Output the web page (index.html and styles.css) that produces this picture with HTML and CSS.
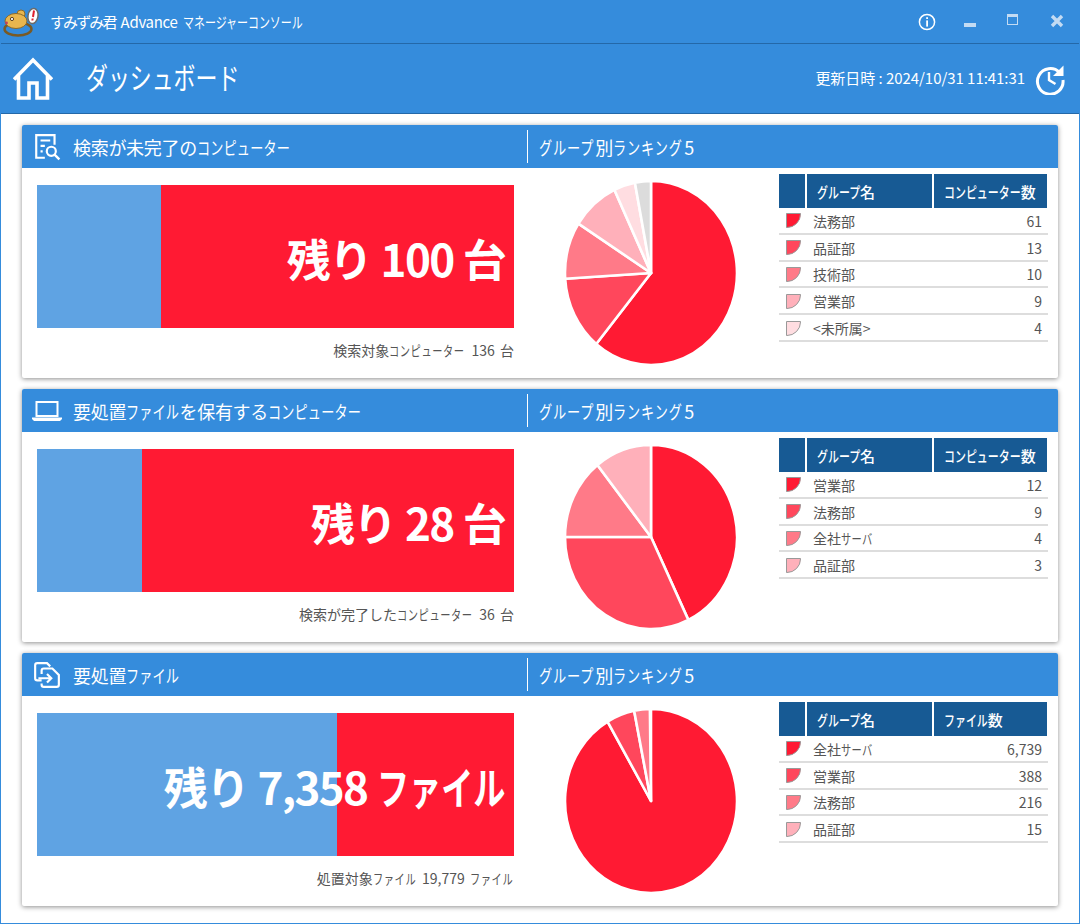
FILE: index.html
```html
<!DOCTYPE html>
<html lang="ja">
<head>
  <meta charset="UTF-8">
  <title>すみずみ君 Advance マネージャーコンソール</title>
  <link rel="stylesheet" href="styles.css">
</head>
<body>
  <div class="app">
    <div class="titlebar">
      <svg class="logo" viewBox="0 0 40 36">
        <ellipse cx="17" cy="26" rx="13.5" ry="6.5" fill="none" stroke="#7a5a24" stroke-width="2.4"/>
        <circle cx="20" cy="11" r="4" fill="#e8b64e" stroke="#8a6a2c"/>
        <ellipse cx="15" cy="18" rx="11" ry="7.5" fill="#e8b64e" stroke="#8a6a2c"/>
        <circle cx="11" cy="16" r="1.6" fill="#fff" stroke="#5a4020"/>
        <circle cx="5.5" cy="20" r="1.4" fill="#c0405a"/>
        <ellipse cx="32" cy="13" rx="5" ry="7.6" fill="#fff" stroke="#6b6b6b" stroke-width="1.5" transform="rotate(10 32 13)"/>
        <path d="M33 7.5 L32 14" stroke="#e0202c" stroke-width="2"/>
        <path d="M31.6 15.5 L31.4 17.5" stroke="#e0202c" stroke-width="2"/>
      </svg>
      <span class="app-name"><span class="app-jp">すみずみ君</span> Advance <span class="kana k11">マネージャーコンソール</span></span>
      <div class="win-btns">
        <svg class="info-icon" viewBox="0 0 18 18">
          <circle cx="9" cy="9" r="7.6" fill="none" stroke="#fff" stroke-width="1.5"/>
          <rect x="8.2" y="4.2" width="1.8" height="1.8" fill="#fff"/>
          <rect x="8.2" y="7.4" width="1.8" height="6.2" fill="#fff"/>
        </svg>
        <span class="win-min"></span>
        <span class="win-max"></span>
        <svg class="win-close" viewBox="0 0 14 14">
          <path d="M2 2 L12 12 M12 2 L2 12" stroke="#c3dbf3" stroke-width="3.4" fill="none"/>
        </svg>
      </div>
    </div>

    <div class="header">
      <svg class="home-icon" viewBox="0 0 40 44">
        <path d="M1 22.5 L20 3 L39 22.5 M5.5 18 V41 H16 V26 H24 V41 H34.5 V18" fill="none" stroke="#fff" stroke-width="3.6"/>
      </svg>
      <h1 class="page-title"><span class="kana k7">ダッシュボード</span></h1>
      <span class="updated">更新日時 : 2024/10/31 11:41:31</span>
      <svg class="refresh-icon" viewBox="0 0 32 32">
        <path d="M25.5 9.5 A12.8 12.8 0 1 0 29 17" fill="none" stroke="#fff" stroke-width="3"/>
        <path d="M29.5 2.5 V13 H19 Z" fill="#fff"/>
        <path d="M15 9 V17 L21.5 21" fill="none" stroke="#fff" stroke-width="2.4"/>
      </svg>
    </div>

    <div class="content">

      <div class="card">
        <div class="card-head">
          <div class="head-left">
            <svg class="head-icon" viewBox="0 0 26 26">
              <path d="M11 23 H3 V2 H20 V11" fill="none" stroke="#fff" stroke-width="2"/>
              <path d="M7 7 H16 M7 12 H11 M7 17 H9" stroke="#fff" stroke-width="2"/>
              <circle cx="17" cy="17" r="4.2" fill="none" stroke="#fff" stroke-width="2"/>
              <path d="M20 20 L24.5 24.5" stroke="#fff" stroke-width="2.2"/>
            </svg>
            <span class="head-title">検索が未完了の<span class="kana k7">コンピューター</span></span>
          </div>
          <div class="head-right"><span class="kana k4">グループ</span>別<span class="kana k5">ランキング</span>5</div>
        </div>
        <div class="card-body">
          <div class="gauge-col">
            <div class="gauge">
              <div class="gauge-fill" style="width:124px"></div>
              <div class="gauge-label">残り 100 台</div>
            </div>
            <div class="gauge-note">検索対象<span class="kana k7">コンピューター</span> 136 台</div>
          </div>
          <svg class="pie" viewBox="-100 -100 200 200" preserveAspectRatio="none">
            <path class="p1" d="M0 0 L0 -100 A100 100 0 1 1 -63.7 77.1 Z"/>
            <path class="p2" d="M0 0 L-63.7 77.1 A100 100 0 0 1 -99.8 6.3 Z"/>
            <path class="p3" d="M0 0 L-99.8 6.3 A100 100 0 0 1 -84.4 -53.6 Z"/>
            <path class="p4" d="M0 0 L-84.4 -53.6 A100 100 0 0 1 -42.6 -90.5 Z"/>
            <path class="p5" d="M0 0 L-42.6 -90.5 A100 100 0 0 1 -18.7 -98.2 Z"/>
            <path class="p6" d="M0 0 L-18.7 -98.2 A100 100 0 0 1 0 -100 Z"/>
          </svg>
          <table class="rank">
            <tr><th class="col-mark"></th><th class="col-name"><span class="kana k4">グループ</span>名</th><th class="col-num"><span class="kana k7">コンピューター</span>数</th></tr>
            <tr><td><span class="mark c1"></span></td><td>法務部</td><td class="num">61</td></tr>
            <tr><td><span class="mark c2"></span></td><td>品証部</td><td class="num">13</td></tr>
            <tr><td><span class="mark c3"></span></td><td>技術部</td><td class="num">10</td></tr>
            <tr><td><span class="mark c4"></span></td><td>営業部</td><td class="num">9</td></tr>
            <tr><td><span class="mark c5"></span></td><td>&lt;未所属&gt;</td><td class="num">4</td></tr>
          </table>
        </div>
      </div>

      <div class="card">
        <div class="card-head">
          <div class="head-left">
            <svg class="head-icon" viewBox="0 0 30 24">
              <path d="M4.5 3 H25.5 V17 H4.5 Z" fill="none" stroke="#fff" stroke-width="2"/>
              <path d="M0 18.5 H30 V20 L28 22 H2 L0 20 Z" fill="#fff"/>
            </svg>
            <span class="head-title">要処置<span class="kana k4">ファイル</span>を保有する<span class="kana k7">コンピューター</span></span>
          </div>
          <div class="head-right"><span class="kana k4">グループ</span>別<span class="kana k5">ランキング</span>5</div>
        </div>
        <div class="card-body">
          <div class="gauge-col">
            <div class="gauge">
              <div class="gauge-fill" style="width:105px"></div>
              <div class="gauge-label">残り 28 台</div>
            </div>
            <div class="gauge-note">検索が完了した<span class="kana k7">コンピューター</span> 36 台</div>
          </div>
          <svg class="pie" viewBox="-100 -100 200 200" preserveAspectRatio="none">
            <path class="p1" d="M0 0 L0 -100 A100 100 0 0 1 43.4 90.1 Z"/>
            <path class="p2" d="M0 0 L43.4 90.1 A100 100 0 0 1 -100 0 Z"/>
            <path class="p3" d="M0 0 L-100 0 A100 100 0 0 1 -62.3 -78.2 Z"/>
            <path class="p4" d="M0 0 L-62.3 -78.2 A100 100 0 0 1 0 -100 Z"/>
          </svg>
          <table class="rank">
            <tr><th class="col-mark"></th><th class="col-name"><span class="kana k4">グループ</span>名</th><th class="col-num"><span class="kana k7">コンピューター</span>数</th></tr>
            <tr><td><span class="mark c1"></span></td><td>営業部</td><td class="num">12</td></tr>
            <tr><td><span class="mark c2"></span></td><td>法務部</td><td class="num">9</td></tr>
            <tr><td><span class="mark c3"></span></td><td>全社<span class="kana k3">サーバ</span></td><td class="num">4</td></tr>
            <tr><td><span class="mark c4"></span></td><td>品証部</td><td class="num">3</td></tr>
          </table>
        </div>
      </div>

      <div class="card">
        <div class="card-head">
          <div class="head-left">
            <svg class="head-icon" viewBox="0 0 26 26">
              <path d="M8 18 H4 A2 2 0 0 1 2 16 V4 A2 2 0 0 1 4 2 H13 L16 5" fill="none" stroke="#fff" stroke-width="2"/>
              <path d="M8 12 V9 A2 2 0 0 1 10 7 H18 L24 13 V22 A2 2 0 0 1 22 24 H10 A2 2 0 0 1 8 22 V21" fill="none" stroke="#fff" stroke-width="2"/>
              <path d="M5 16 H17 M13 12 L17 16 L13 20" fill="none" stroke="#fff" stroke-width="2"/>
            </svg>
            <span class="head-title">要処置<span class="kana k4">ファイル</span></span>
          </div>
          <div class="head-right"><span class="kana k4">グループ</span>別<span class="kana k5">ランキング</span>5</div>
        </div>
        <div class="card-body">
          <div class="gauge-col">
            <div class="gauge">
              <div class="gauge-fill" style="width:300px"></div>
              <div class="gauge-label">残り 7,358 <span class="kana k4">ファイル</span></div>
            </div>
            <div class="gauge-note">処置対象<span class="kana k4">ファイル</span> 19,779 <span class="kana k4">ファイル</span></div>
          </div>
          <svg class="pie" viewBox="-100 -100 200 200" preserveAspectRatio="none">
            <path class="p1" d="M0 0 L0 -100 A100 100 0 1 1 -50.5 -86.3 Z"/>
            <path class="p2" d="M0 0 L-50.5 -86.3 A100 100 0 0 1 -19.6 -98.1 Z"/>
            <path class="p3" d="M0 0 L-19.6 -98.1 A100 100 0 0 1 -1.3 -100 Z"/>
          </svg>
          <table class="rank">
            <tr><th class="col-mark"></th><th class="col-name"><span class="kana k4">グループ</span>名</th><th class="col-num"><span class="kana k4">ファイル</span>数</th></tr>
            <tr><td><span class="mark c1"></span></td><td>全社<span class="kana k3">サーバ</span></td><td class="num">6,739</td></tr>
            <tr><td><span class="mark c2"></span></td><td>営業部</td><td class="num">388</td></tr>
            <tr><td><span class="mark c3"></span></td><td>法務部</td><td class="num">216</td></tr>
            <tr><td><span class="mark c4"></span></td><td>品証部</td><td class="num">15</td></tr>
          </table>
        </div>
      </div>

    </div>
  </div>
</body>
</html>
```

FILE: styles.css
```css
* {
  box-sizing: border-box;
}
html, body {
  margin: 0;
  height: 100%;
}
body {
  font-family: "Noto Sans CJK JP", "Noto Sans", sans-serif;
  color: #555;
  background: #fff;
}
.app {
  height: 924px;
  border: 1px solid #358cdc;
  border-top: 0;
  display: flex;
  flex-direction: column;
}

/* katakana is narrow in the original UI font */
.kana {
  display: inline-block;
  letter-spacing: 0;
  transform: scaleX(0.73);
  transform-origin: 0 50%;
}
.k3 { margin-right: -0.81em; }
.k4 { margin-right: -1.08em; }
.k5 { margin-right: -1.35em; }
.k7 { margin-right: -1.89em; }
.k11 { margin-right: -2.97em; }

/* title bar */
.titlebar {
  height: 44px;
  background: #358cdc;
  border-bottom: 1px solid #2468a8;
  display: flex;
  align-items: center;
  color: #fff;
}
.logo {
  width: 40px;
  height: 36px;
  margin: 0 0 2px 0;
}
.app-name {
  margin-left: 9px;
  font-size: 15px;
  letter-spacing: -0.3px;
  word-spacing: 2px;
  white-space: nowrap;
}
.app-jp {
  letter-spacing: -1.9px;
}
.win-btns {
  margin-left: auto;
  display: flex;
  align-items: center;
}
.info-icon {
  width: 18px;
  height: 18px;
  margin-right: 28px;
}
.win-min {
  width: 12px;
  height: 4px;
  margin: 6px 31px 0 0;
  background: #c3dbf3;
}
.win-max {
  width: 11px;
  height: 11px;
  margin: -5px 32px 0 0;
  border: 1px solid #c3dbf3;
  border-top-width: 3px;
}
.win-close {
  width: 14px;
  height: 14px;
  margin: -2px 15px 0 0;
}

/* page header */
.header {
  height: 70px;
  background: #358cdc;
  border-bottom: 1px solid #2468a8;
  display: flex;
  align-items: center;
  color: #fff;
}
.home-icon {
  width: 40px;
  height: 44px;
  margin-left: 12px;
}
.page-title {
  margin: -5px 0 0 33px;
  font-size: 30px;
  font-weight: 400;
}
.updated {
  margin: -2px 0 0 auto;
  font-size: 15px;
  letter-spacing: -0.05px;
  white-space: nowrap;
}
.refresh-icon {
  width: 32px;
  height: 32px;
  margin: 0 13px 0 9px;
}

/* cards */
.content {
  flex: 1;
  padding: 11px 21px 0;
  display: flex;
  flex-direction: column;
  gap: 11px;
}
.card {
  height: 253px;
  background: #fff;
  box-shadow: 0 1px 5px rgba(0,0,0,0.45);
  border-radius: 2px;
}
.card-head {
  height: 43px;
  background: #358cdc;
  color: #fff;
  font-size: 18px;
  display: flex;
  align-items: center;
  letter-spacing: -0.3px;
  white-space: nowrap;
  border-radius: 2px 2px 0 0;
}
.head-left {
  width: 506px;
  height: 33px;
  padding-left: 10px;
  border-right: 1px solid #fff;
  display: flex;
  align-items: center;
}
.head-title {
  margin-left: 11px;
}
.head-title .kana {
  letter-spacing: 0.2px;
}
.head-icon {
  width: 30px;
  height: 28px;
}
.head-right {
  margin-left: 11px;
}
.head-right .kana {
  letter-spacing: 1.2px;
}
.card-body {
  display: flex;
  align-items: flex-start;
}

/* gauge */
.gauge-col {
  width: 477px;
  margin: 17px 0 0 15px;
}
.gauge {
  position: relative;
  height: 143px;
  background: #ff1a33;
  display: flex;
  align-items: center;
  justify-content: flex-end;
  padding: 2px 9px 0 0;
}
.gauge-fill {
  position: absolute;
  left: 0;
  top: 0;
  bottom: 0;
  background: #5fa3e3;
}
.gauge-label {
  position: relative;
  color: #fff;
  font-size: 44px;
  font-weight: 700;
  letter-spacing: -1.7px;
  word-spacing: 1px;
  white-space: nowrap;
}
.gauge-note {
  margin-top: 12px;
  text-align: right;
  font-size: 14px;
  word-spacing: 2px;
  white-space: nowrap;
  color: #555;
}
.gauge-note .kana {
  letter-spacing: 0.8px;
}

/* pie */
.pie {
  width: 172px;
  height: 184px;
  margin: 13px 0 0 51px;
}
.pie path {
  stroke: #fff;
  stroke-width: 2.6;
  stroke-linejoin: round;
  vector-effect: non-scaling-stroke;
}
.p1 { fill: #ff1a33; }
.p2 { fill: #ff475c; }
.p3 { fill: #ff7a88; }
.p4 { fill: #ffb0ba; }
.p5 { fill: #ffdde1; }
.p6 { fill: #dcdcdc; }

/* ranking table */
.rank {
  width: 269px;
  margin: 6px 0 0 42px;
  border-collapse: separate;
  border-spacing: 0;
  table-layout: fixed;
  font-size: 14px;
}
.rank th {
  height: 34px;
  padding: 0 0 0 10px;
  background: #175a94;
  color: #fff;
  font-size: 15px;
  font-weight: 500;
  text-align: left;
  white-space: nowrap;
  border-right: 2px solid #fff;
}
.rank th:last-child {
  border-right-width: 1px;
}
.col-mark { width: 28px; }
.col-name { width: 127px; }
.rank td {
  height: 26.8px;
  padding: 1px 0 0 6px;
  border-bottom: 2px solid #ddd;
  line-height: 1;
}
.rank td:first-child {
  padding-left: 7px;
}
.rank td.num {
  text-align: right;
  padding-right: 6px;
}
.rank td .kana {
  letter-spacing: 0.5px;
}
.mark {
  display: block;
  width: 15px;
  height: 15px;
  border: 1px solid #999;
  border-bottom-right-radius: 14px;
}
.c1 { background: #ff1a33; }
.c2 { background: #ff475c; }
.c3 { background: #ff7a88; }
.c4 { background: #ffb0ba; }
.c5 { background: #ffdde1; }
```
